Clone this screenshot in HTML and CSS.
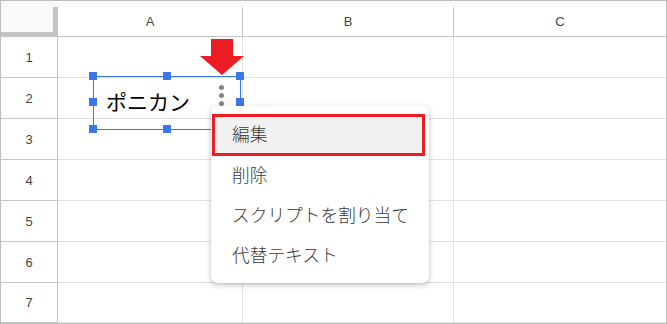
FILE: index.html
```html
<!DOCTYPE html>
<html lang="ja">
  <head>
    <meta charset="UTF-8" />
    <meta name="viewport" content="width=device-width, initial-scale=1.0" />
    <title>ポニカン</title>
    <link rel="stylesheet" href="styles.css">
  </head>
  <body>
    <main class="sheet">
      <div class="strip"></div>

      <div class="corner"></div>
      <div class="col-head">A</div>
      <div class="col-head">B</div>
      <div class="col-head last">C</div>

      <div class="row-head">1</div><div class="cell"></div><div class="cell"></div><div class="cell last"></div>
      <div class="row-head">2</div><div class="cell"></div><div class="cell"></div><div class="cell last"></div>
      <div class="row-head">3</div><div class="cell"></div><div class="cell"></div><div class="cell last"></div>
      <div class="row-head">4</div><div class="cell"></div><div class="cell"></div><div class="cell last"></div>
      <div class="row-head">5</div><div class="cell"></div><div class="cell"></div><div class="cell last"></div>
      <div class="row-head">6</div><div class="cell"></div><div class="cell"></div><div class="cell last"></div>
      <div class="row-head">7</div><div class="cell"></div><div class="cell"></div><div class="cell last"></div>

      <!-- selected drawing -->
      <div class="shape">
        <span class="shape-text">ポニカン</span>
        <span class="kebab"><i></i><i></i><i></i></span>
        <span class="handle tl"></span>
        <span class="handle tm"></span>
        <span class="handle tr"></span>
        <span class="handle ml"></span>
        <span class="handle mr"></span>
        <span class="handle bl"></span>
        <span class="handle bm"></span>
        <span class="handle br"></span>
      </div>

      <svg class="arrow" width="44" height="36" viewBox="0 0 44 36">
        <polygon points="11,0 33,0 33,17 44,17 22,36 0,17 11,17" fill="#ec1c24" />
      </svg>

      <ul class="menu">
        <li class="item picked">編集</li>
        <li class="item">削除</li>
        <li class="item">スクリプトを割り当て</li>
        <li class="item">代替テキスト</li>
      </ul>
    </main>
  </body>
</html>
```

FILE: styles.css
```css
body {
  margin: 0;
  background-color: #fff;
  font-family: 'Liberation Sans', Arial, 'Noto Sans CJK JP', sans-serif;
}

.sheet {
  position: relative;
  width: 667px;
  height: 324px;
  box-sizing: border-box;
  border: 1px solid #bdbdbd;
  display: grid;
  grid-template-columns: 57px 185px 211px 212px;
  grid-template-rows: 6px 30px repeat(6, 41px) 40px;
  overflow: hidden;
}

.strip {
  grid-column: 1 / -1;
  background-color: #f8f9fa;
}

.corner {
  background-color: #f8f9fa;
  border-right: 5px solid #c4c4c4;
  border-bottom: 5px solid #c4c4c4;
}

.col-head,
.row-head {
  display: flex;
  justify-content: center;
  align-items: center;
  font-size: 13px;
  color: #444;
  border-right: 1px solid #c4c4c4;
  border-bottom: 1px solid #c4c4c4;
}

.cell {
  border-right: 1px solid #e2e2e2;
  border-bottom: 1px solid #e2e2e2;
}

.last {
  border-right: none;
}

/* drawing */
.shape {
  position: absolute;
  left: 92px;
  top: 75px;
  width: 146px;
  height: 52px;
  border: 1px solid #3b78e7;
}

.shape-text {
  display: block;
  padding: 12px 0 0 12px;
  font-family: 'Noto Sans CJK JP', sans-serif;
  font-size: 21px;
  line-height: 24px;
  color: #000;
}

.kebab {
  position: absolute;
  left: 125px;
  top: 8px;
  display: flex;
  flex-direction: column;
  gap: 3px;
}

.kebab i {
  width: 5px;
  height: 5px;
  border-radius: 50%;
  background-color: #858585;
}

.handle {
  position: absolute;
  width: 8px;
  height: 8px;
  background-color: #3b78e7;
}

.tl { left: -5px; top: -5px; }
.tm { left: 69px; top: -5px; }
.tr { left: 142px; top: -5px; }
.ml { left: -5px; top: 21px; }
.mr { left: 142px; top: 21px; }
.bl { left: -5px; top: 48px; }
.bm { left: 69px; top: 48px; }
.br { left: 142px; top: 48px; }

.arrow {
  position: absolute;
  left: 199px;
  top: 38px;
}

/* context menu */
.menu {
  position: absolute;
  left: 210px;
  top: 105px;
  width: 218px;
  margin: 0;
  padding: 8px 0 9px;
  list-style: none;
  background-color: #fff;
  border-radius: 6px;
  box-shadow: 0 2px 6px rgba(0, 0, 0, 0.22), 0 1px 2px rgba(0, 0, 0, 0.1);
}

.item {
  height: 40px;
  box-sizing: border-box;
  padding-left: 21px;
  display: flex;
  align-items: center;
  font-family: 'Noto Sans CJK JP', sans-serif;
  font-size: 17.7px;
  font-weight: 300;
  color: #3a3a3a;
}

.picked {
  height: 42px;
  margin: 0 4px -2px 1px;
  padding: 0 0 4px 17px;
  border: 3px solid #ec1c24;
  background-color: #f1f1f1;
}
```
